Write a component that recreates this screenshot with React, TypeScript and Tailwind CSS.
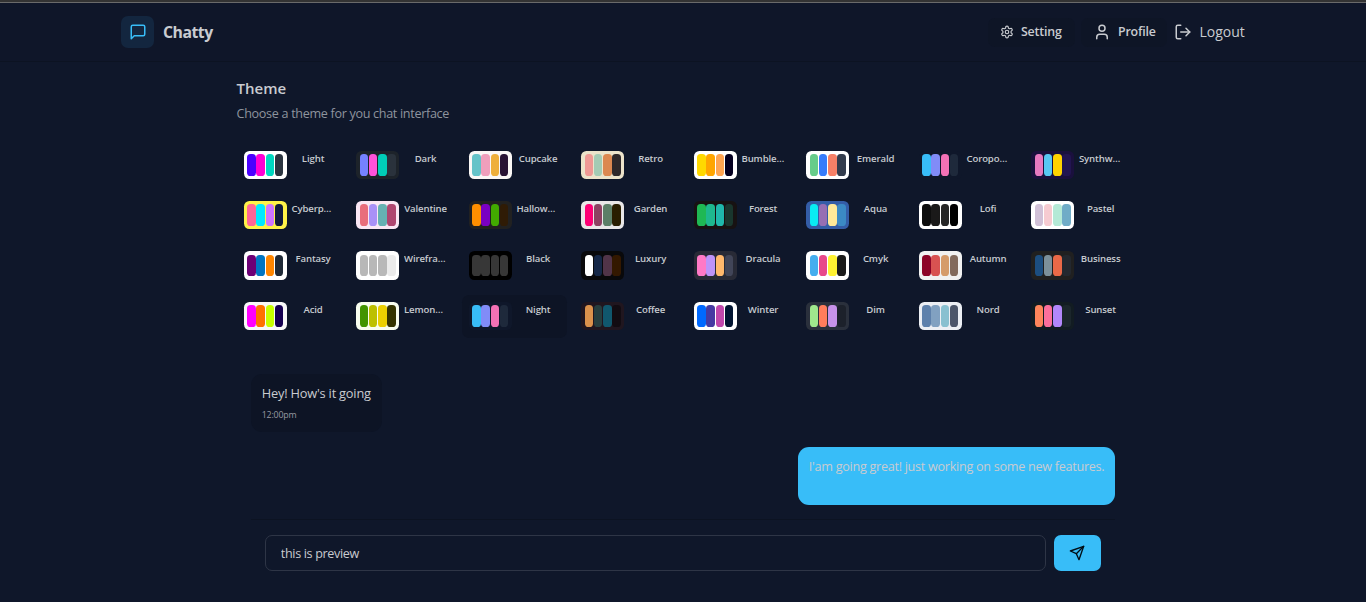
import type { ReactNode } from "react";
import { LogOut, User } from "lucide-react";

type Theme = { name: string; bg: string; bars: string[] };

const themes: Theme[] = [
  { name: "Light", bg: "#ffffff", bars: ["#4b00ff", "#ff00d3", "#00d7c0", "#2b3440"] },
  { name: "Dark", bg: "#1d232a", bars: ["#7582ff", "#ff52d9", "#00cdb7", "#2a323c"] },
  { name: "Cupcake", bg: "#faf7f5", bars: ["#65c3c8", "#ef9fbc", "#eeaf3a", "#291334"] },
  { name: "Retro", bg: "#ece3ca", bars: ["#ef9995", "#a4cbb4", "#dc8850", "#2e282a"] },
  { name: "Bumblebee", bg: "#ffffff", bars: ["#ffd900", "#ffa500", "#ffa552", "#040021"] },
  { name: "Emerald", bg: "#ffffff", bars: ["#66cc8a", "#377cfb", "#f68067", "#333c4d"] },
  { name: "Coroporate", bg: "#0f172a", bars: ["#38bdf8", "#818cf8", "#f471b5", "#1e293b"] },
  { name: "Synthwave", bg: "#1a103d", bars: ["#e779c1", "#58c7f3", "#ffd200", "#221551"] },
  { name: "Cyberpunk", bg: "#fff248", bars: ["#ff6596", "#00e8ff", "#ce74ff", "#111a3b"] },
  { name: "Valentine", bg: "#fae7f4", bars: ["#e96d7b", "#a991f7", "#66b1b3", "#af4670"] },
  { name: "Halloween", bg: "#212121", bars: ["#ff8f00", "#7a00c2", "#42aa00", "#2f1b05"] },
  { name: "Garden", bg: "#e9e7e7", bars: ["#fe0075", "#8e4162", "#5c7f67", "#291e00"] },
  { name: "Forest", bg: "#171212", bars: ["#1fb854", "#1eb88e", "#1fb8ab", "#19362d"] },
  { name: "Aqua", bg: "#345da7", bars: ["#09ecf3", "#966fb3", "#ffe999", "#3b8ac4"] },
  { name: "Lofi", bg: "#ffffff", bars: ["#0d0d0d", "#1a1919", "#262626", "#000000"] },
  { name: "Pastel", bg: "#ffffff", bars: ["#d1c1d7", "#f6cbd1", "#b4e9d6", "#70acc7"] },
  { name: "Fantasy", bg: "#ffffff", bars: ["#6d0076", "#0075c2", "#ff8600", "#1f2937"] },
  { name: "Wireframe", bg: "#ffffff", bars: ["#b8b8b8", "#b8b8b8", "#b8b8b8", "#ebebeb"] },
  { name: "Black", bg: "#000000", bars: ["#373737", "#373737", "#373737", "#373737"] },
  { name: "Luxury", bg: "#09090b", bars: ["#ffffff", "#152747", "#513448", "#331800"] },
  { name: "Dracula", bg: "#282a36", bars: ["#ff79c6", "#bd93f9", "#ffb86c", "#414558"] },
  { name: "Cmyk", bg: "#ffffff", bars: ["#45aeee", "#e8488a", "#fff232", "#1a1a1a"] },
  { name: "Autumn", bg: "#f1f1f1", bars: ["#8c0327", "#d85251", "#d59b6a", "#826a5c"] },
  { name: "Business", bg: "#202020", bars: ["#1c4e80", "#7c909a", "#ea6947", "#23282f"] },
  { name: "Acid", bg: "#f8f8f8", bars: ["#ff00ff", "#ff7000", "#c8ff00", "#150050"] },
  { name: "Lemonade", bg: "#f8fdef", bars: ["#419400", "#bdc000", "#ecd000", "#343300"] },
  { name: "Night", bg: "#0f172a", bars: ["#38bdf8", "#818cf8", "#f471b5", "#1e293b"] },
  { name: "Coffee", bg: "#20161f", bars: ["#db924c", "#263e3f", "#10576d", "#120c12"] },
  { name: "Winter", bg: "#ffffff", bars: ["#0069ff", "#463aa2", "#c148ac", "#021431"] },
  { name: "Dim", bg: "#2a303c", bars: ["#9fe88d", "#ff7d5c", "#c792e9", "#1c212b"] },
  { name: "Nord", bg: "#eceff4", bars: ["#5e81ac", "#81a1c1", "#88c0d0", "#4c566a"] },
  { name: "Sunset", bg: "#121c22", bars: ["#ff865b", "#fd6f9c", "#b387fa", "#1b262c"] },
];

function Icon({ size, className = "", children }: { size: number; className?: string; children: ReactNode }) {
  return (
    <svg
      width={size}
      height={size}
      viewBox="0 0 24 24"
      fill="none"
      stroke="currentColor"
      strokeWidth={2}
      strokeLinecap="round"
      strokeLinejoin="round"
      className={className}
    >
      {children}
    </svg>
  );
}

function ThemeCard({ theme, active }: { theme: Theme; active: boolean }) {
  return (
    <button
      className={`grid h-[43.2px] min-w-0 grid-cols-[43px_minmax(0,1fr)] gap-[4.7px] rounded-[7.2px] p-[7.2px] ${active ? "bg-[#0d1425]" : ""}`}
    >
      <span
        className="grid h-[28.4px] grid-cols-4 gap-[0.9px] rounded-[5.4px] p-[3.4px]"
        style={{ backgroundColor: theme.bg }}
      >
        {theme.bars.map((color, i) => (
          <span key={i} className="rounded-[3.6px]" style={{ backgroundColor: color }} />
        ))}
      </span>
      <span className="truncate text-center text-[9.6px] leading-[15px] font-semibold tracking-[-0.13px] text-[#c6cacf]">
        {theme.name}
      </span>
    </button>
  );
}

export default function App() {
  return (
    <div className="flex h-[602px] w-full flex-col overflow-hidden bg-[#0f172a] font-['Open_Sans','Noto_Sans',sans-serif] text-[#c9cbd0]">
      <div className="h-[3px] shrink-0 border-b border-[#6a6a6a] bg-[#333333]" />
      <header className="h-[59px] shrink-0 border-b border-[#0c1322] bg-[#0f1629]">
        <div className="ml-[121px] flex h-[58px] w-[1125px] items-center justify-between">
          <div className="flex items-center gap-[9px]">
            <div className="flex h-8 w-[33px] items-center justify-center rounded-[7px] bg-[#13263f]">
              <Icon size={18} className="text-[#38bdf8]">
                <path d="M21 15a2 2 0 0 1-2 2H7l-4 4V5a2 2 0 0 1 2-2h14a2 2 0 0 1 2 2z" />
              </Icon>
            </div>
            <h1 className="pt-[2px] text-[15.8px] font-bold tracking-[-0.5px]">Chatty</h1>
          </div>
          <nav className="flex items-center">
            <a className="flex h-[29px] w-[87px] items-center gap-[7px] rounded-[7px] bg-[#0e1526] pl-[12px] text-[12.4px] font-semibold tracking-[-0.2px]">
              <Icon size={14}>
                <path d="M12.22 2h-.44a2 2 0 0 0-2 2v.18a2 2 0 0 1-1 1.73l-.43.25a2 2 0 0 1-2 0l-.15-.08a2 2 0 0 0-2.73.73l-.22.38a2 2 0 0 0 .73 2.73l.15.1a2 2 0 0 1 1 1.72v.51a2 2 0 0 1-1 1.74l-.15.09a2 2 0 0 0-.73 2.73l.22.38a2 2 0 0 0 2.73.73l.15-.08a2 2 0 0 1 2 0l.43.25a2 2 0 0 1 1 1.73V20a2 2 0 0 0 2 2h.44a2 2 0 0 0 2-2v-.18a2 2 0 0 1 1-1.73l.43-.25a2 2 0 0 1 2 0l.15.08a2 2 0 0 0 2.73-.73l.22-.39a2 2 0 0 0-.73-2.73l-.15-.08a2 2 0 0 1-1-1.74v-.5a2 2 0 0 1 1-1.74l.15-.09a2 2 0 0 0 .73-2.73l-.22-.38a2 2 0 0 0-2.73-.73l-.15.08a2 2 0 0 1-2 0l-.43-.25a2 2 0 0 1-1-1.73V4a2 2 0 0 0-2-2z" />
                <circle cx="12" cy="12" r="3" />
              </Icon>
              Setting
            </a>
            <a className="ml-[6px] flex h-[29px] w-[86px] items-center gap-[7px] rounded-[7px] bg-[#0e1526] pl-[12px] text-[12.4px] font-semibold tracking-[-0.2px]">
              <User size={18} />
              Profile
            </a>
            <a className="ml-[7px] flex w-[72px] items-center gap-[7px] text-[14px]">
              <LogOut size={18} className="shrink-0" />
              <span className="-mt-[2px] pl-[0.5px]">Logout</span>
            </a>
          </nav>
        </div>
      </header>

      <main className="ml-[236.6px] w-[892.8px]">
        <h2 className="mt-[14px] text-[15px] leading-[25px] font-semibold">Theme</h2>
        <p className="mt-[4px] text-[12.6px] leading-[18px] tracking-[-0.32px] text-[#8e949e]">
          Choose a theme for you chat interface
        </p>
        <div className="mt-[20.4px] grid grid-cols-8 gap-[7.2px]">
          {themes.map((theme) => (
            <ThemeCard key={theme.name} theme={theme} active={theme.name === "Night"} />
          ))}
        </div>

        <section className="mr-[14.6px] ml-[14.2px] flex flex-col pt-[36.2px]">
          <div className="h-[58px] w-[131px] rounded-[11px] bg-[#0d1425] px-[11px] pt-[10px]">
            <p className="text-[12.8px] leading-[18px] whitespace-nowrap tracking-[-0.2px]">Hey! How's it going</p>
            <p className="mt-[6px] text-[8.8px] leading-[14px] tracking-[-0.2px] text-[#969aa2]">12:00pm</p>
          </div>
          <div className="mt-[15px] h-[58px] w-[317px] self-end rounded-[11px] bg-[#38bdf8] px-[11px] pt-[11px]">
            <p className="text-[12.6px] leading-[18px] whitespace-nowrap tracking-[-0.27px]">
              I'am going great! just working on some new features.
            </p>
          </div>
          <div className="mt-[14px] flex gap-2 border-t border-[#0c1322] px-[14px] pt-[15px]">
            <input
              readOnly
              value="this is preview"
              className="h-9 min-w-0 flex-1 rounded-[7px] border border-[#2e3546] bg-transparent px-[15px] pt-[2px] text-[12.6px] tracking-[-0.34px] outline-none"
            />
            <button className="flex h-9 w-[47px] items-center justify-center rounded-[7px] bg-[#38bdf8] text-[#010d15]">
              <Icon size={16}>
                <path d="m22 2-7 20-4-9-9-4Z" />
                <path d="M22 2 11 13" />
              </Icon>
            </button>
          </div>
        </section>
      </main>
    </div>
  );
}
